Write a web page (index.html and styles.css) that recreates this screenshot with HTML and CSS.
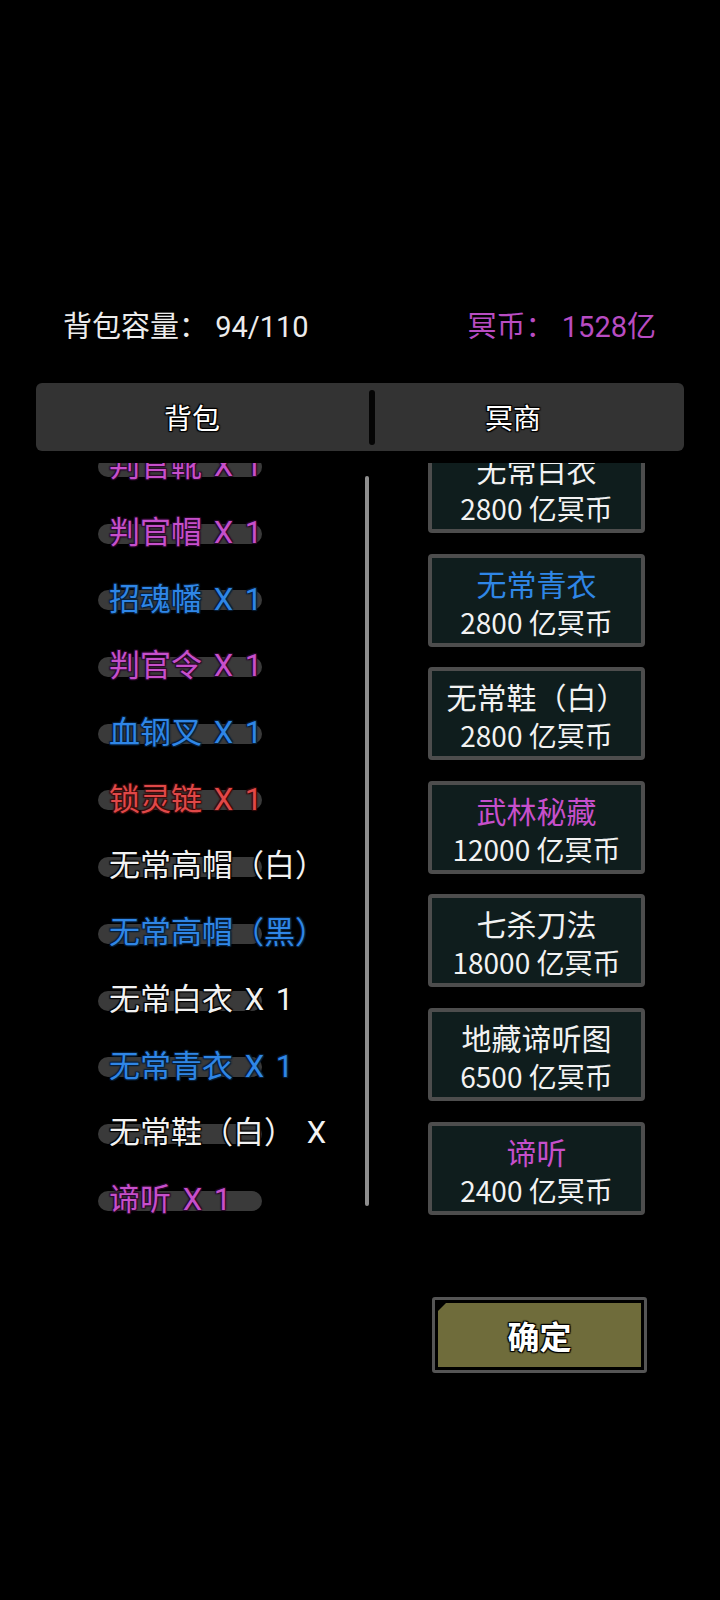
FILE: index.html
```html
<!DOCTYPE html>
<html lang="zh">
<head>
    <meta charset="UTF-8">
    <meta name="viewport" content="width=device-width, initial-scale=1.0">
    <title>背包</title>
    <link rel="stylesheet" href="styles.css">
</head>
<body>
    <div class="header">
        <span class="capacity">背包容量： 94/110</span>
        <span class="coins">冥币： 1528亿</span>
    </div>

    <div class="tabs">
        <div class="tab tab-bag">背包</div>
        <div class="tab-divider"></div>
        <div class="tab tab-shop">冥商</div>
    </div>

    <div class="content">
        <div class="bag-view">
            <div class="bag-list">
                <div class="item purple"><span class="pill"></span><span class="name">判官靴 X 1</span></div>
                <div class="item purple"><span class="pill"></span><span class="name">判官帽 X 1</span></div>
                <div class="item blue"><span class="pill"></span><span class="name">招魂幡 X 1</span></div>
                <div class="item purple"><span class="pill"></span><span class="name">判官令 X 1</span></div>
                <div class="item blue"><span class="pill"></span><span class="name">血钢叉 X 1</span></div>
                <div class="item red"><span class="pill"></span><span class="name">锁灵链 X 1</span></div>
                <div class="item white"><span class="pill"></span><span class="name">无常高帽（白） X 1</span></div>
                <div class="item blue"><span class="pill"></span><span class="name">无常高帽（黑） X 1</span></div>
                <div class="item white"><span class="pill"></span><span class="name">无常白衣 X 1</span></div>
                <div class="item blue"><span class="pill"></span><span class="name">无常青衣 X 1</span></div>
                <div class="item white"><span class="pill"></span><span class="name">无常鞋（白） X 1</span></div>
                <div class="item purple"><span class="pill"></span><span class="name">谛听 X 1</span></div>
            </div>
        </div>
        <div class="scrollbar"></div>
        <div class="shop-view">
            <div class="shop-list">
                <div class="card"><div class="card-title">无常白衣</div><div class="card-price">2800 亿冥币</div></div>
                <div class="card"><div class="card-title blue">无常青衣</div><div class="card-price">2800 亿冥币</div></div>
                <div class="card"><div class="card-title">无常鞋（白）</div><div class="card-price">2800 亿冥币</div></div>
                <div class="card"><div class="card-title purple">武林秘藏</div><div class="card-price">12000 亿冥币</div></div>
                <div class="card"><div class="card-title">七杀刀法</div><div class="card-price">18000 亿冥币</div></div>
                <div class="card"><div class="card-title">地藏谛听图</div><div class="card-price">6500 亿冥币</div></div>
                <div class="card"><div class="card-title purple">谛听</div><div class="card-price">2400 亿冥币</div></div>
            </div>
        </div>
    </div>

    <div class="confirm">
        <div class="confirm-inner">确定</div>
    </div>
</body>
</html>
```

FILE: styles.css
```css
body {
    margin: 0;
    padding-top: 307px;
    background: #000;
    width: 720px;
    height: 1600px;
    font-family: Roboto, "Noto Sans CJK SC", sans-serif;
    color: #fff;
    overflow: hidden;
}
.header {
    display: flex;
    justify-content: space-between;
    padding: 0 64px 0 63px;
    height: 40px;
    line-height: 40px;
    font-size: 29px;
}
.capacity {
    color: #ececec;
}
.coins {
    color: #b84cc2;
}
.tabs {
    display: flex;
    align-items: center;
    margin: 36px 0 0 36px;
    width: 648px;
    height: 68px;
    background: #333;
    border-radius: 6px;
}
.tab {
    text-align: center;
    font-size: 28px;
    font-family: "Noto Sans CJK SC", sans-serif;
    color: #fff;
    text-shadow: 0 0 2px #000, 1px 1px 1px #000, -1px -1px 1px #000, 1px -1px 1px #000, -1px 1px 1px #000;
}
.tab-bag {
    width: 312px;
}
.tab-divider {
    margin-left: 21px;
    width: 6px;
    height: 55px;
    background: #050505;
    border-radius: 3px;
}
.tab-shop {
    width: 276px;
}
.content {
    display: flex;
    margin-top: 12px;
    height: 753px;
}
.bag-view {
    width: 336px;
    height: 753px;
    overflow: hidden;
}
.bag-list {
    margin-top: -30px;
}
.item {
    position: relative;
    height: 66.7px;
    display: flex;
    align-items: center;
    padding-left: 109px;
    white-space: nowrap;
    font-size: 31px;
    word-spacing: 4px;
}
.pill {
    position: absolute;
    left: 98px;
    top: 24px;
    width: 164px;
    height: 20px;
    border-radius: 10px;
    background: #3a3a3a;
}
.name {
    position: relative;
    line-height: 40px;
    text-shadow: 0 0 2px #000, 1px 1px 1px #000, -1px -1px 1px #000, 1px -1px 1px #000, -1px 1px 1px #000;
}
.item.purple .name {
    color: #c64fcb;
    text-shadow: 0 0 2px #2a0a2c, 1px 1px 1px #2a0a2c, -1px -1px 1px #2a0a2c, 1px -1px 1px #2a0a2c, -1px 1px 1px #2a0a2c;
}
.item.blue .name {
    color: #2f86e6;
    text-shadow: 0 0 2px #08203a, 1px 1px 1px #08203a, -1px -1px 1px #08203a, 1px -1px 1px #08203a, -1px 1px 1px #08203a;
}
.item.red .name {
    color: #e04848;
    text-shadow: 0 0 2px #3a0c0c, 1px 1px 1px #3a0c0c, -1px -1px 1px #3a0c0c, 1px -1px 1px #3a0c0c, -1px 1px 1px #3a0c0c;
}
.item.white .name {
    color: #f2f2f2;
}
.scrollbar {
    margin: 13px 0 0 29px;
    width: 4px;
    height: 730px;
    border-radius: 2px;
    background: #8e8e8e;
}
.shop-view {
    margin-left: 59px;
    width: 217px;
    height: 753px;
    overflow: hidden;
}
.shop-list {
    display: flex;
    flex-direction: column;
    gap: 20.6px;
    margin-top: -23px;
}
.card {
    box-sizing: border-box;
    height: 93px;
    border: 4px solid #4d4d4d;
    border-radius: 4px;
    background: #0f1d1d;
    padding-top: 7px;
    text-align: center;
    font-family: "Noto Sans CJK SC", sans-serif;
    white-space: nowrap;
    overflow: hidden;
}
.card-title {
    font-size: 30px;
    line-height: 36px;
    color: #f2f2f2;
}
.card-title.blue {
    color: #2f86e6;
}
.card-title.purple {
    color: #c64fcb;
}
.card-price {
    font-size: 28px;
    line-height: 42px;
    color: #f2f2f2;
}
.confirm {
    box-sizing: border-box;
    margin: 81px 0 0 432px;
    width: 215px;
    height: 76px;
    border: 3px solid #555;
    border-radius: 3px;
    padding: 3px;
    background: #000;
}
.confirm-inner {
    height: 100%;
    background: #6f6c3b;
    clip-path: polygon(8px 0, 100% 0, 100% 100%, 0 100%, 0 8px);
    display: flex;
    align-items: center;
    justify-content: center;
    font-family: "Noto Sans CJK SC", sans-serif;
    font-size: 32px;
    font-weight: bold;
    color: #fff;
    text-shadow: 0 0 2px #000, 1px 1px 1px #000, -1px -1px 1px #000, 1px -1px 1px #000, -1px 1px 1px #000;
}
```
